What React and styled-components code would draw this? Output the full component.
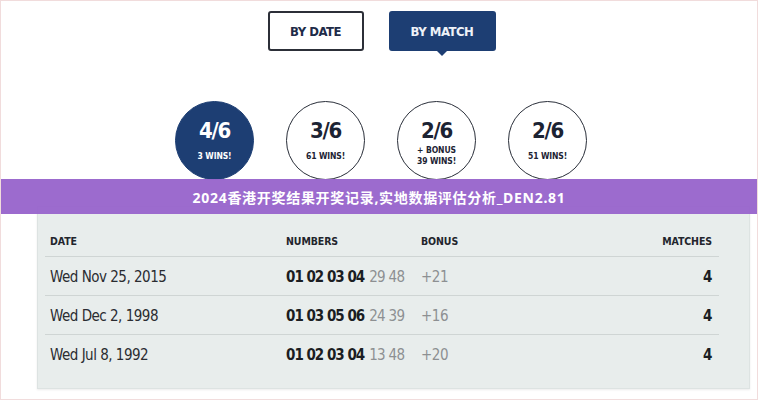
import React from 'react';
import styled, { createGlobalStyle } from 'styled-components';

const navy = '#1d3e73';
const ink = '#1f2433';
const condensed = `"DejaVu Sans Condensed", "DejaVu Sans", sans-serif`;

const GlobalStyle = createGlobalStyle`
	html, body {
		margin: 0;
		padding: 0;
		background: #ffffff;
	}
	* {
		box-sizing: border-box;
	}
`;

const results = [
	{ date: 'Wed Nov 25, 2015', main: '01 02 03 04', extra: '29 48', bonus: '+21', matches: 4 },
	{ date: 'Wed Dec 2, 1998', main: '01 03 05 06', extra: '24 39', bonus: '+16', matches: 4 },
	{ date: 'Wed Jul 8, 1992', main: '01 02 03 04', extra: '13 48', bonus: '+20', matches: 4 },
];

const tallies = [
	{ score: '4/6', lines: ['3 WINS!'], active: true },
	{ score: '3/6', lines: ['61 WINS!'] },
	{ score: '2/6', lines: ['+ BONUS', '39 WINS!'], compact: true },
	{ score: '2/6', lines: ['51 WINS!'] },
];

const App = () => (
	<Page>
		<GlobalStyle />
		<Toggle>
			<ToggleButton width={96}>BY DATE</ToggleButton>
			<ToggleButton width={107} active>
				BY MATCH
			</ToggleButton>
		</Toggle>
		<Tallies>
			{tallies.map((t, i) => (
				<Tally key={i} active={t.active}>
					<Score compact={t.compact}>{t.score}</Score>
					{t.lines.map((l) => (
						<Wins key={l}>{l}</Wins>
					))}
				</Tally>
			))}
		</Tallies>
		<Panel>
			<Table>
				<HeadCell>DATE</HeadCell>
				<HeadCell>NUMBERS</HeadCell>
				<HeadCell>BONUS</HeadCell>
				<HeadCell right>MATCHES</HeadCell>
				{results.map((r, i) => {
					const last = i === results.length - 1;
					return (
						<React.Fragment key={r.date}>
							<DateCell last={last}>{r.date}</DateCell>
							<NumCell last={last}>
								<b>{r.main}</b>
								<span>{r.extra}</span>
							</NumCell>
							<BonusCell last={last}>{r.bonus}</BonusCell>
							<MatchCell last={last}>{r.matches}</MatchCell>
						</React.Fragment>
					);
				})}
			</Table>
		</Panel>
		<Banner>2024香港开奖结果开奖记录,实地数据评估分析_DEN2.81</Banner>
	</Page>
);

const Page = styled.div`
	position: relative;
	width: 758px;
	height: 400px;
	border: 1px solid #f1dcdc;
	overflow: hidden;
	font-family: ${condensed};
	color: ${ink};
`;

const Toggle = styled.div`
	display: flex;
	justify-content: center;
	gap: 25px;
	padding: 10px 0 0 5px;
`;

const ToggleButton = styled.div`
	position: relative;
	width: ${(p) => p.width}px;
	height: 40px;
	display: flex;
	align-items: center;
	justify-content: center;
	border: 2px solid ${(p) => (p.active ? navy : '#2c2f38')};
	border-radius: 3px;
	background: ${(p) => (p.active ? navy : '#fff')};
	color: ${(p) => (p.active ? '#eef2f8' : '#1e2b48')};
	font-size: 13px;
	font-weight: 700;
	letter-spacing: -0.5px;
	&::after {
		content: '';
		display: ${(p) => (p.active ? 'block' : 'none')};
		position: absolute;
		left: 50%;
		bottom: -7px;
		margin-left: -5px;
		border-left: 5px solid transparent;
		border-right: 5px solid transparent;
		border-top: 5px solid ${navy};
	}
`;

const Tallies = styled.div`
	display: flex;
	justify-content: center;
	gap: 32px;
	padding: 50px 0 0 4px;
`;

const Tally = styled.div`
	width: 79px;
	height: 79px;
	border-radius: 50%;
	display: flex;
	flex-direction: column;
	align-items: center;
	justify-content: flex-start;
	padding-top: 18px;
	border: 1.5px solid ${(p) => (p.active ? navy : '#2a2f3a')};
	background: ${(p) => (p.active ? navy : '#fff')};
	color: ${(p) => (p.active ? '#fff' : '#1c2333')};
`;

const Score = styled.div`
	font-size: 22px;
	font-weight: 700;
	line-height: 22px;
	letter-spacing: -1.2px;
	margin-bottom: ${(p) => (p.compact ? '3px' : '9px')};
`;

const Wins = styled.div`
	font-size: 8.5px;
	font-weight: 700;
	line-height: 11px;
	letter-spacing: -0.1px;
`;

const Panel = styled.div`
	margin: 26px 7px 0 36px;
	padding: 0 30px 20px 7px;
	background: #e8edec;
	border: 1px solid #dde3e2;
	box-shadow: 0 1px 2px rgba(0, 0, 0, 0.08);
	height: 183px;
`;

const Table = styled.div`
	display: grid;
	grid-template-columns: 236px 135px 1fr auto;
	align-items: center;
`;

const Cell = styled.div`
	height: 39px;
	padding: 1px 7px 0 5px;
	display: flex;
	align-items: center;
	border-bottom: 1px solid ${(p) => (p.last ? 'transparent' : '#cfd5d4')};
	font-size: 15px;
	letter-spacing: -0.5px;
	white-space: nowrap;
`;

const HeadCell = styled(Cell)`
	height: 50px;
	padding-top: 18px;
	justify-content: ${(p) => (p.right ? 'flex-end' : 'flex-start')};
	font-size: 10.5px;
	font-weight: 700;
	letter-spacing: -0.1px;
	color: #22252c;
`;

const DateCell = styled(Cell)`
	color: #2a2c31;
`;

const NumCell = styled(Cell)`
	b {
		color: #1b1d22;
		letter-spacing: -1px;
	}
	span {
		color: #8d9092;
		margin-left: 5px;
		letter-spacing: -0.7px;
	}
`;

const BonusCell = styled(Cell)`
	color: #8d9092;
`;

const MatchCell = styled(Cell)`
	justify-content: flex-end;
	font-weight: 700;
	color: #1b1d22;
`;

const Banner = styled.div`
	position: absolute;
	left: 0;
	right: 0;
	top: 178px;
	height: 35px;
	display: flex;
	align-items: center;
	justify-content: center;
	background: rgba(153, 102, 204, 0.97);
	color: #fff;
	font-family: "Noto Sans", "Noto Sans CJK SC", sans-serif;
	font-size: 14px;
	font-weight: 700;
	letter-spacing: 0.7px;
`;

export default App;
